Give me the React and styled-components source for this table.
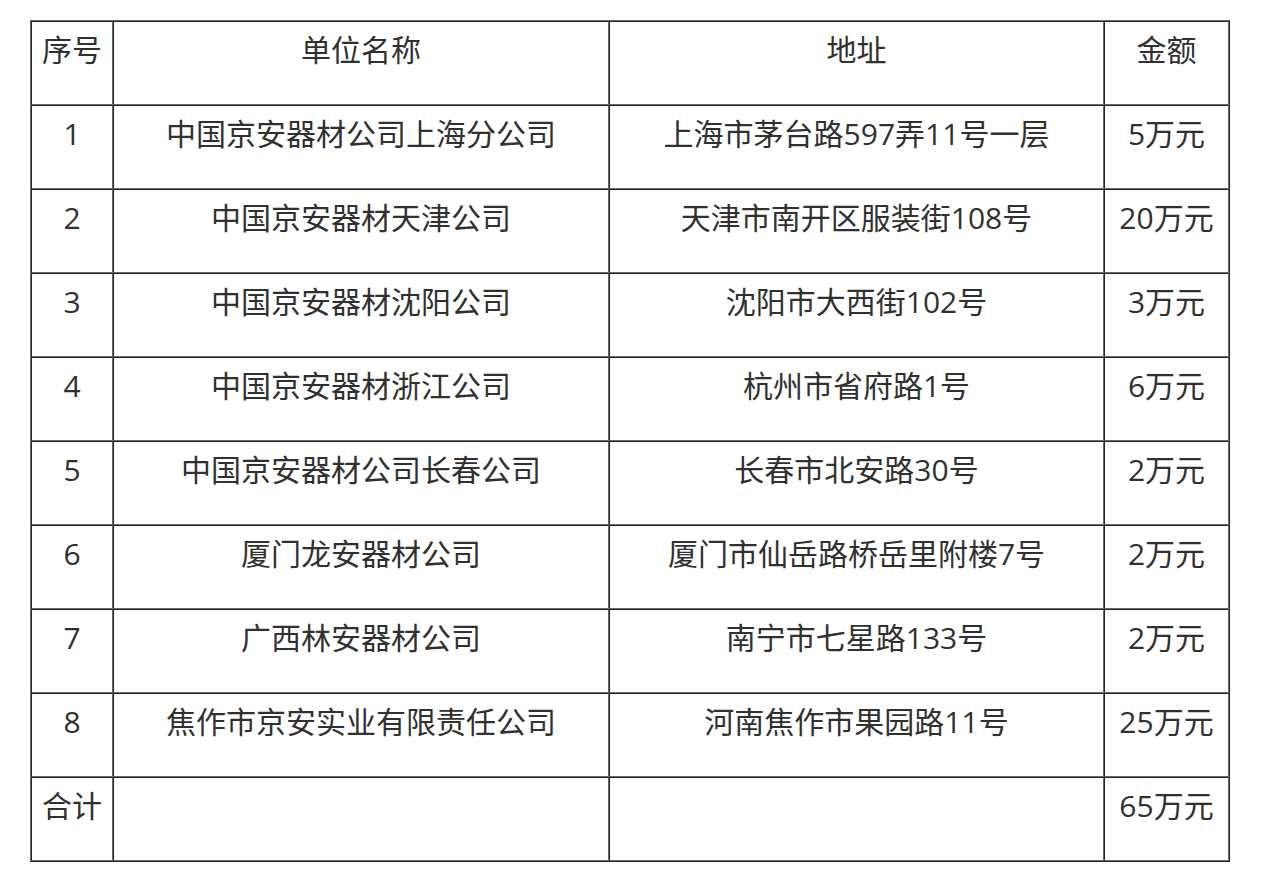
import React from 'react';
import styled, { createGlobalStyle } from 'styled-components';

const GlobalStyle = createGlobalStyle`
  html, body {
    margin: 0;
    padding: 0;
    background: #ffffff;
  }
  body {
    font-family: "Open Sans", "Noto Sans CJK SC", sans-serif;
    color: #333333;
  }
`;

const Page = styled.div`
  padding: 20px 0 0 30px;
`;

const Table = styled.table`
  width: 1200px;
  table-layout: fixed;
  border-collapse: separate;
  border-spacing: 0;
  border-style: solid;
  border-width: 1px;
  border-color: #6a6a6a #262626 #262626 #6a6a6a;
`;

const Cell = styled.td`
  box-sizing: border-box;
  width: ${(p) => p.$w}px;
  height: 84px;
  padding: 6px 2px 0;
  vertical-align: top;
  text-align: center;
  font-size: 30px;
  line-height: 44px;
  font-weight: 400;
  white-space: nowrap;
  color: #303030;
  border-style: solid;
  border-width: 1px;
  border-color: #262626 #6a6a6a #6a6a6a #262626;
`;

const WIDTHS = [82, 496, 495, 125];

const HEAD = ['序号', '单位名称', '地址', '金额'];

const ROWS = [
  ['1', '中国京安器材公司上海分公司', '上海市茅台路597弄11号一层', '5万元'],
  ['2', '中国京安器材天津公司', '天津市南开区服装街108号', '20万元'],
  ['3', '中国京安器材沈阳公司', '沈阳市大西街102号', '3万元'],
  ['4', '中国京安器材浙江公司', '杭州市省府路1号', '6万元'],
  ['5', '中国京安器材公司长春公司', '长春市北安路30号', '2万元'],
  ['6', '厦门龙安器材公司', '厦门市仙岳路桥岳里附楼7号', '2万元'],
  ['7', '广西林安器材公司', '南宁市七星路133号', '2万元'],
  ['8', '焦作市京安实业有限责任公司', '河南焦作市果园路11号', '25万元'],
  ['合计', '', '', '65万元'],
];

export default function App() {
  return (
    <Page>
      <GlobalStyle />
      <Table>
        <tbody>
          <tr>
            {HEAD.map((h, i) => (
              <Cell as="th" key={h} $w={WIDTHS[i]}>{h}</Cell>
            ))}
          </tr>
          {ROWS.map((row) => (
            <tr key={row[0]}>
              {row.map((c, i) => (
                <Cell key={i} $w={WIDTHS[i]}>{c}</Cell>
              ))}
            </tr>
          ))}
        </tbody>
      </Table>
    </Page>
  );
}
